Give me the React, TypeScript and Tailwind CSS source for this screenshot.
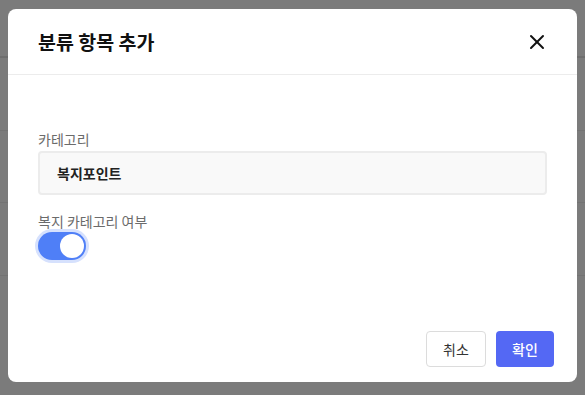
import { X } from "lucide-react";

const font = { fontFamily: '"Noto Sans CJK KR", "Noto Sans", sans-serif' };

export default function App() {
    return (
        <div className="relative w-[585px] h-[395px] overflow-hidden bg-[#7b7b7b]" style={font}>
            {/* dimmed page behind the modal */}
            <div className="flex flex-col">
                <div className="h-[58px] border-b-2 border-[#6e6e6e]" />
                <div className="h-[73px] border-b border-[#737373]" />
                <div className="h-[72px] border-b border-[#737373]" />
                <div className="h-[73px] border-b border-[#737373]" />
            </div>

            <div className="absolute left-[8px] top-[9px] w-[569px] h-[373px] bg-white rounded-lg flex flex-col">
                <div className="h-[66px] border-b border-[#ececec] pl-[30px] pr-[28px] flex items-center justify-between">
                    <h1 className="text-[19.5px] font-bold text-[#111]">분류 항목 추가</h1>
                    <button type="button" className="text-[#111]">
                        <X size={24} strokeWidth={2} />
                    </button>
                </div>

                <div className="flex-1 px-[30px] pt-[54px] flex flex-col">
                    <label className="text-[14px] leading-[20px] text-[#6b6b6b]">카테고리</label>
                    <div className="mt-[2px] h-[44px] rounded bg-[#f9f9f9] border-2 border-[#ececec] px-[17px] flex items-center text-[14px] font-bold text-[#222]">
                        복지포인트
                    </div>
                    <label className="mt-[16px] text-[14px] leading-[20px] text-[#6b6b6b]">복지 카테고리 여부</label>
                    <div className="mt-[1px] w-[48px] h-[28px] rounded-full bg-[#4f7ff7] p-[2px] flex justify-end ring-[3px] ring-[#d6e1fd]">
                        <div className="w-[24px] h-[24px] rounded-full bg-white" />
                    </div>
                </div>

                <div className="flex justify-end gap-[10px] pr-[23px] pb-[15px]">
                    <button type="button" className="w-[60px] h-[36px] rounded border border-[#dcdcdc] bg-white text-[14px] text-[#333]">
                        취소
                    </button>
                    <button type="button" className="w-[58px] h-[36px] rounded bg-[#5468f4] text-[14px] font-medium text-white">
                        확인
                    </button>
                </div>
            </div>
        </div>
    );
}
